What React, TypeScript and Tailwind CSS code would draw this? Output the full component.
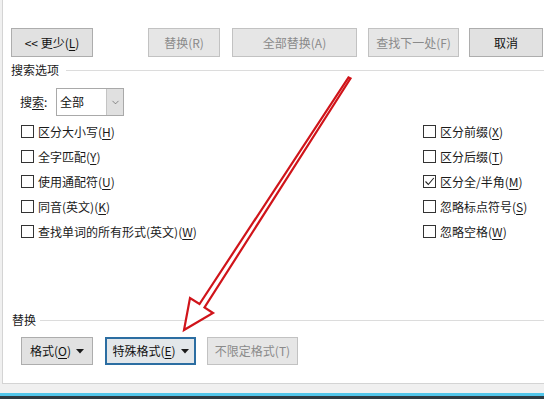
import { ChevronDown } from "lucide-react";

type Opt = { label: string; key: string; checked?: boolean };

const LEFT_OPTS: Opt[] = [
  { label: "区分大小写", key: "H" },
  { label: "全字匹配", key: "Y" },
  { label: "使用通配符", key: "U" },
  { label: "同音(英文)", key: "K" },
  { label: "查找单词的所有形式(英文)", key: "W" },
];

const RIGHT_OPTS: Opt[] = [
  { label: "区分前缀", key: "X" },
  { label: "区分后缀", key: "T" },
  { label: "区分全/半角", key: "M", checked: true },
  { label: "忽略标点符号", key: "S" },
  { label: "忽略空格", key: "W" },
];

// accelerator letter, underlined like a Windows dialog
const Acc = ({ k }: { k: string }) => (
  <>
    (<span className="underline underline-offset-2">{k}</span>)
  </>
);

const Caret = () => (
  <svg width="8" height="5" viewBox="0 0 8 5" className="ml-[5px]">
    <path d="M0 0 L8 0 L4 4.5 Z" fill="#1a1a1a" />
  </svg>
);

function Button({
  width,
  disabled,
  focused,
  children,
}: {
  width: string;
  disabled?: boolean;
  focused?: boolean;
  children: React.ReactNode;
}) {
  let cls = "border border-[#adadad] bg-[#e1e1e1] text-[#111]";
  if (disabled) cls = "border border-[#c2c2c2] bg-[#e6e6e6] text-[#8a8a8a]";
  if (focused) cls = "border-2 border-[#2c6ea2] bg-[#e3e7ea] text-[#111]";
  return (
    <div className={`${width} ${cls} flex h-full shrink-0 items-center justify-center`}>
      {children}
    </div>
  );
}

function Checkbox({ opt }: { opt: Opt }) {
  return (
    <div className="flex h-[25px] items-center">
      <div className="flex h-[13px] w-[13px] items-center justify-center border border-[#333] bg-white">
        {opt.checked && (
          <svg width="11" height="11" viewBox="0 0 11 11">
            <path d="M1.5 5.5 L4.3 8.5 L9.8 2" fill="none" stroke="#222" strokeWidth="1.1" />
          </svg>
        )}
      </div>
      <span className="ml-[4px] text-[#1a1a1a]">
        {opt.label}
        <Acc k={opt.key} />
      </span>
    </div>
  );
}

export default function App() {
  return (
    <div className="relative h-[399px] w-[544px] overflow-hidden bg-[#f0f0f0] font-['Noto_Sans_CJK_SC','Noto_Sans_CJK_JP',sans-serif] text-[12px] leading-[16px]">
      <div className="ml-[2px] flex h-[384px] flex-col border-b border-l border-[#d4d4d4] bg-white">
        {/* top buttons */}
        <div className="mt-[28px] flex h-[29px] pl-[8px]">
          <Button width="w-[82px]">
            {"<< 更少"}
            <Acc k="L" />
          </Button>
          <div className="ml-[55px] flex h-full">
            <Button width="w-[72px]" disabled>
              替换(R)
            </Button>
          </div>
          <div className="ml-[12px] flex h-full">
            <Button width="w-[125px]" disabled>
              全部替换(A)
            </Button>
          </div>
          <div className="ml-[11px] flex h-full">
            <Button width="w-[91px]" disabled>
              查找下一处(F)
            </Button>
          </div>
          <div className="ml-[10px] flex h-full">
            <Button width="w-[74px]">取消</Button>
          </div>
        </div>

        {/* 搜索选项 */}
        <div className="mt-[5px] flex h-[16px] items-center pl-[8px]">
          <span className="text-[#1a1a1a]">搜索选项</span>
          <div className="ml-[7px] h-px flex-1 bg-[#dcdcdc]" />
        </div>

        <div className="mt-[10px] flex h-[28px] items-center pl-[17px]">
          <span className="w-[36px] text-[#1a1a1a]">
            搜<span className="underline underline-offset-2">索</span>:
          </span>
          <div className="flex h-full w-[68px] border border-[#a9a9a9] bg-white">
            <span className="flex flex-1 items-center pl-[3px] text-[#111]">全部</span>
            <div className="flex w-[17px] items-center justify-center border-l border-[#c4c4c4] bg-[#e0e0e0]">
              <ChevronDown size={11} strokeWidth={1.4} color="#555" />
            </div>
          </div>
        </div>

        <div className="mt-[3px] flex pl-[18px]">
          <div className="flex w-[402px] flex-col">
            {LEFT_OPTS.map((o) => (
              <Checkbox key={o.label} opt={o} />
            ))}
          </div>
          <div className="flex flex-col">
            {RIGHT_OPTS.map((o) => (
              <Checkbox key={o.label} opt={o} />
            ))}
          </div>
        </div>

        {/* 替换 */}
        <div className="mt-[68px] flex h-[16px] items-center pl-[9px]">
          <span className="text-[#1a1a1a]">替换</span>
          <div className="ml-[4px] h-px flex-1 bg-[#dcdcdc]" />
        </div>

        <div className="mt-[9px] flex h-[28px] pl-[18px]">
          <Button width="w-[72px]">
            格式
            <Acc k="O" />
            <Caret />
          </Button>
          <div className="ml-[12px] flex h-full">
            <Button width="w-[91px]" focused>
              特殊格式
              <Acc k="E" />
              <Caret />
            </Button>
          </div>
          <div className="ml-[11px] flex h-full">
            <Button width="w-[91px]" disabled>
              不限定格式(T)
            </Button>
          </div>
        </div>
      </div>
      <div className="h-[9px] bg-[#f0f0f0]" />
      <div className="h-[3px] bg-[#52c6ea]" />
      <div className="h-[3px] bg-[#2e3a41]" />

      {/* red annotation arrow */}
      <svg
        className="pointer-events-none absolute left-0 top-0"
        width="544"
        height="399"
        viewBox="0 0 544 399"
      >
        <polygon
          points="350.5,78.5 204.5,307.5 213,313 184,330 190,298 199.5,304 348.5,77.5"
          fill="white"
          stroke="#d0141a"
          strokeWidth="2.2"
          strokeLinejoin="miter"
        />
      </svg>
    </div>
  );
}
